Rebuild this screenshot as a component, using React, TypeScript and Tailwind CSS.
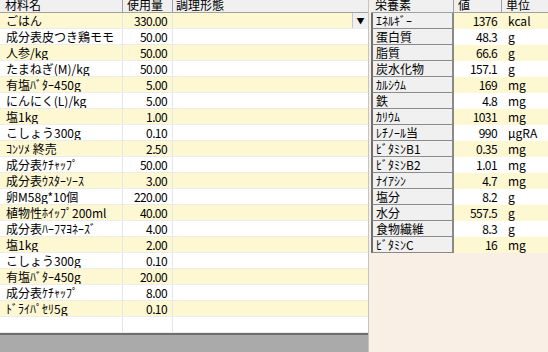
import React from "react";

const ingredients: [string, string][] = [
  ["ごはん", "330.00"],
  ["成分表皮つき鶏モモ", "50.00"],
  ["人参/kg", "50.00"],
  ["たまねぎ(M)/kg", "50.00"],
  ["有塩ﾊﾞﾀｰ450g", "5.00"],
  ["にんにく(L)/kg", "5.00"],
  ["塩1kg", "1.00"],
  ["こしょう300g", "0.10"],
  ["ｺﾝｿﾒ 終売", "2.50"],
  ["成分表ｹﾁｬｯﾌﾟ", "50.00"],
  ["成分表ｳｽﾀｰｿｰｽ", "3.00"],
  ["卵M58g*10個", "220.00"],
  ["植物性ﾎｲｯﾌﾟ200ml", "40.00"],
  ["成分表ﾊｰﾌﾏﾖﾈｰｽﾞ", "4.00"],
  ["塩1kg", "2.00"],
  ["こしょう300g", "0.10"],
  ["有塩ﾊﾞﾀｰ450g", "20.00"],
  ["成分表ｹﾁｬｯﾌﾟ", "8.00"],
  ["ﾄﾞﾗｲﾊﾟｾﾘ5g", "0.10"],
  ["", ""],
];

const nutrients: [string, string, string][] = [
  ["ｴﾈﾙｷﾞｰ", "1376", "kcal"],
  ["蛋白質", "48.3", "g"],
  ["脂質", "66.6", "g"],
  ["炭水化物", "157.1", "g"],
  ["ｶﾙｼｳﾑ", "169", "mg"],
  ["鉄", "4.8", "mg"],
  ["ｶﾘｳﾑ", "1031", "mg"],
  ["ﾚﾁﾉｰﾙ当", "990", "μgRA"],
  ["ﾋﾞﾀﾐﾝB1", "0.35", "mg"],
  ["ﾋﾞﾀﾐﾝB2", "1.01", "mg"],
  ["ﾅｲｱｼﾝ", "4.7", "mg"],
  ["塩分", "8.2", "g"],
  ["水分", "557.5", "g"],
  ["食物繊維", "8.3", "g"],
  ["ﾋﾞﾀﾐﾝC", "16", "mg"],
];

const font = { fontFamily: '"Noto Sans CJK JP", sans-serif' };

export default function App() {
  return (
    <div
      className="flex w-[548px] h-[352px] overflow-hidden text-[12px] leading-none text-black"
      style={font}
    >
      {/* ingredients grid */}
      <div className="flex flex-col w-[369px] bg-white border-r border-[#c4c4c4]">
        <div className="grid grid-cols-[123px_50px_1fr] h-[13px] bg-[#f0f0f0] border-b border-[#a0a0a0] overflow-hidden">
          <div className="pl-[5px] border-r border-[#a0a0a0] -mt-[1px]">材料名</div>
          <div className="pl-[4px] border-r border-[#a0a0a0] -mt-[1px]">使用量</div>
          <div className="pl-[3px] -mt-[1px]">調理形態</div>
        </div>
        {ingredients.map(([name, qty], i) => (
          <div
            key={i}
            className={`grid grid-cols-[123px_50px_1fr] h-[16px] border-b border-[#ececec] ${
              i % 2 === 0 ? "bg-[#fdf7d2]" : "bg-white"
            }`}
          >
            <div className="pl-[6px] flex items-center border-r border-[#e6e6e6] whitespace-nowrap overflow-hidden">
              {name}
            </div>
            <div className="pr-[5px] flex items-center justify-end border-r border-[#e6e6e6] tracking-[-0.6px]">
              {qty}
            </div>
            <div className="flex justify-end">
              {i === 0 && (
                <div className="w-[16px] h-[15px] bg-[#f0f0f0] border-l border-[#c8c8c8] flex items-center justify-center text-[8px]">
                  ▼
                </div>
              )}
            </div>
          </div>
        ))}
        <div className="flex-1 bg-[#aaaaaa] border-t-2 border-[#6e6e6e]" />
      </div>

      {/* nutrients */}
      <div className="flex-1 bg-[#f9efe5] pl-[2px]">
        <div className="grid grid-cols-[83px_48px_1fr] h-[13px] bg-[#f0f0f0] border-b border-[#a0a0a0] overflow-hidden">
          <div className="pl-[4px] border-r border-[#a0a0a0] -mt-[1px]">栄養素</div>
          <div className="pl-[4px] border-r border-[#a0a0a0] -mt-[1px]">値</div>
          <div className="pl-[4px] -mt-[1px]">単位</div>
        </div>
        {nutrients.map(([name, val, unit], i) => (
          <div key={i} className="grid grid-cols-[83px_48px_1fr] h-[16px]">
            <div className="pl-[3px] flex items-center bg-[#f0f0f0] border-l-2 border-r-2 border-b border-l-[#6f6f6f] border-r-[#8a8a8a] border-b-[#8a8a8a] whitespace-nowrap">
              {name}
            </div>
            <div
              className={`pr-[5px] flex items-center justify-end tracking-[-0.6px] ${
                i % 2 === 0 ? "bg-[#fdf7d2]" : "bg-white"
              }`}
            >
              {val}
            </div>
            <div
              className={`pl-[6px] flex items-center ${
                i % 2 === 0 ? "bg-[#fdf7d2]" : "bg-white"
              }`}
            >
              {unit}
            </div>
          </div>
        ))}
      </div>
    </div>
  );
}
